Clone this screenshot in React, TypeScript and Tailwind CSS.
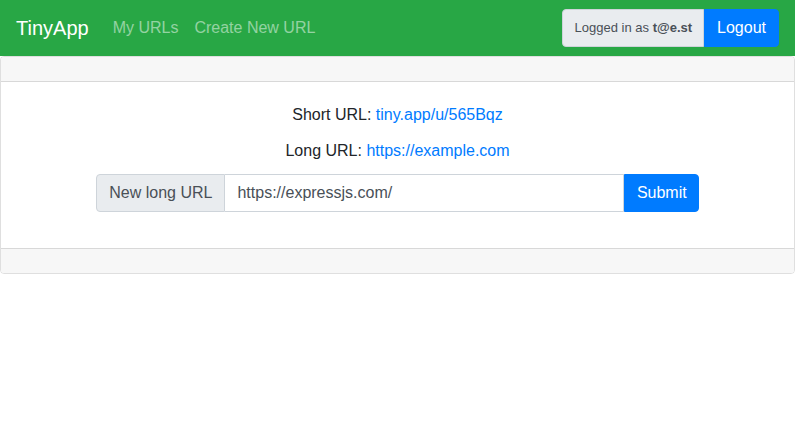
import React from "react";

export default function App() {
  return (
    <div className="min-h-[422px] bg-white text-[#212529] text-[16px] leading-[24px]" style={{ fontFamily: '"Liberation Sans", Arial, sans-serif' }}>
      <nav className="h-[56px] bg-[#28a745] flex items-center px-4">
        <a className="text-white text-[20px] leading-[30px] mr-4 py-[5px]">TinyApp</a>
        <div className="flex">
          <a className="text-[rgba(255,255,255,0.5)] px-2 py-2">My URLs</a>
          <a className="text-[rgba(255,255,255,0.5)] px-2 py-2">Create New URL</a>
        </div>
        <div className="ml-auto flex items-stretch h-[38px]">
          <span className="flex items-center bg-[#e9ecef] border border-[#ced4da] rounded-l-[4px] pl-[12px] pr-[11px] text-[13px] text-[#495057]">
            Logged in as&nbsp;<b className="font-bold">t@e.st</b>
          </span>
          <button className="bg-[#007bff] text-white px-3 rounded-r-[4px] border border-[#007bff] text-[16px]">Logout</button>
        </div>
      </nav>
      <div className="border border-[rgba(0,0,0,0.125)] rounded-[4px] overflow-hidden">
        <div className="h-[24px] bg-[#f7f7f7] border-b border-[rgba(0,0,0,0.125)] box-content"></div>
        <div className="p-5 text-center">
          <p className="pt-[1px] mb-[11px]">
            Short URL: <a className="text-[#007bff]">tiny.app/u/565Bqz</a>
          </p>
          <p className="pt-[1px] mb-[11px]">
            Long URL: <a className="text-[#007bff]">https://example.com</a>
          </p>
          <div className="w-[80%] mx-auto flex h-[38px] mb-4">
            <span className="flex items-center bg-[#e9ecef] border border-[#ced4da] rounded-l-[4px] px-3 text-[#495057]">New long URL</span>
            <input
              className="flex-1 border border-l-0 border-[#ced4da] px-3 text-[#495057] outline-none"
              defaultValue="https://expressjs.com/"
            />
            <button className="bg-[#007bff] text-white pl-3 pr-[11px] rounded-r-[4px] border border-[#007bff]">Submit</button>
          </div>
        </div>
        <div className="h-[24px] bg-[#f7f7f7] border-t border-[rgba(0,0,0,0.125)] box-content"></div>
      </div>
    </div>
  );
}
